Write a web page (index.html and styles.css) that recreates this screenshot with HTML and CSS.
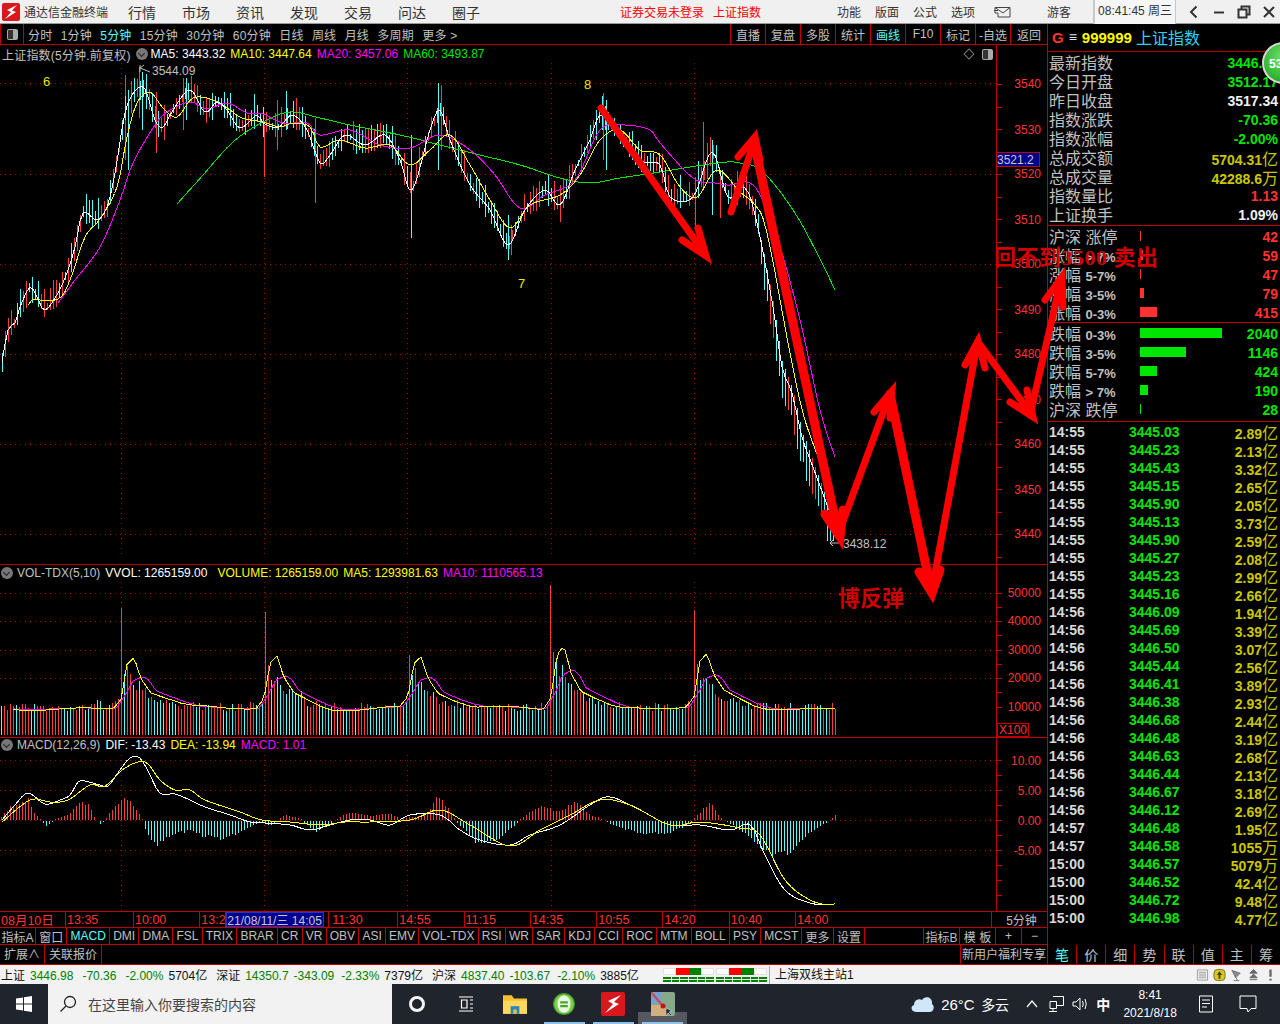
FILE: index.html
```html
<!DOCTYPE html>
<html lang="zh">
<head>
<meta charset="utf-8">
<title>通达信金融终端</title>
<link rel="stylesheet" href="styles.css">
</head>
<body>
<header class="titlebar">
  <svg class="logo" viewBox="0 0 18 18"><rect width="18" height="18" rx="2" fill="#d8181c"/><path d="M15 2 L5 7 L9 9 L3 16 L14 9 L10 7.5 Z" fill="#fff"/></svg>
  <span class="app-name">通达信金融终端</span>
  <nav class="menu"><span>行情</span><span>市场</span><span>资讯</span><span>发现</span><span>交易</span><span>问达</span><span>圈子</span></nav>
  <div class="notice"><span>证券交易未登录</span><span>上证指数</span></div>
  <nav class="menu-small"><span>功能</span><span>版面</span><span>公式</span><span>选项</span></nav>
  <svg class="mail" viewBox="0 0 17 12"><path d="M1 1.5 H16 V11 H4 V7 H1 Z M1 1.5 L9 7 L16 1.5 M0 4.5 H4" fill="none" stroke="#444"/></svg>
  <span class="guest">游客</span>
  <div class="clock">08:41:45 周三</div>
  <div class="winbtns">
    <svg viewBox="0 0 14 14"><path d="M9.5 1.5 L4 7 L9.5 12.5" fill="none" stroke="#333" stroke-width="2"/></svg>
    <svg viewBox="0 0 14 14"><path d="M2 7.5 H12" fill="none" stroke="#333" stroke-width="2"/></svg>
    <svg viewBox="0 0 14 14"><path d="M1.500 4.500 H9.500 V12.500 H1.500 Z M4.500 4 V1.500 H12.500 V9.500 H10" fill="none" stroke="#333" stroke-width="2"/></svg>
    <svg viewBox="0 0 14 14"><path d="M2 2 L12 12 M12 2 L2 12" fill="none" stroke="#333" stroke-width="2"/></svg>
  </div>
</header>

<main class="workspace">
  <section class="left">
    <div class="toolbar">
      <div class="panel-btn"><span class="panel-icon"></span></div>
      <div class="periods"><span>分时</span><span>1分钟</span><span class="on">5分钟</span><span>15分钟</span><span>30分钟</span><span>60分钟</span><span>日线</span><span>周线</span><span>月线</span><span>多周期</span><span>更多 &gt;</span></div>
      <div class="tools"><span>直播</span><span>复盘</span><span>多股</span><span>统计</span><span class="on">画线</span><span>F10</span><span>标记</span><span>-自选</span><span>返回</span></div>
    </div>

    <div class="pane pane-main">
      <div class="legend">
        <span class="c-gray spaced">上证指数(5分钟.前复权)</span><span class="chev"></span>
        <span class="c-white">MA5: 3443.32</span><span class="c-yellow">MA10: 3447.64</span><span class="c-magenta">MA20: 3457.06</span><span class="c-green">MA60: 3493.87</span>
        <span class="legend-tools"><i class="diamond"></i><span class="panel-icon"></span></span>
      </div>
      <svg id="main-chart" class="plot plot-main" viewBox="0 63 1047 501"></svg>
    </div>

    <div class="pane pane-vol">
      <div class="legend">
        <span class="chev first"></span><span class="c-gray">VOL-TDX(5,10)</span><span class="c-white">VVOL: 1265159.00</span><span class="c-yellow wide">VOLUME: 1265159.00</span><span class="c-yellow">MA5: 1293981.63</span><span class="c-magenta">MA10: 1110565.13</span>
      </div>
      <svg id="vol-chart" class="plot plot-vol" viewBox="0 582 1047 155"></svg>
    </div>

    <div class="pane pane-macd">
      <div class="legend">
        <span class="chev first"></span><span class="c-gray">MACD(12,26,9)</span><span class="c-white">DIF: -13.43</span><span class="c-yellow">DEA: -13.94</span><span class="c-magenta">MACD: 1.01</span>
      </div>
      <svg id="macd-chart" class="plot plot-macd" viewBox="0 755 1047 156"></svg>
    </div>

    <div class="timeline">
      <span class="t w67">08月10日</span><span class="t w67b">13:35</span><span class="t w66">10:00</span><span class="t w26">13:2</span><span class="cursor">21/08/11/三 14:05</span><span class="t w66s">11:30</span><span class="t w66">14:55</span><span class="t w66">11:15</span><span class="t w66">14:35</span><span class="t w66">10:55</span><span class="t w66">14:20</span><span class="t w66">10:40</span><span class="t w66e">14:00</span><span class="t-unit">5分钟</span>
    </div>

    <div class="tabs">
      <span class="first-tab">指标A</span><span>窗口</span><span class="on">MACD</span><span>DMI</span><span>DMA</span><span>FSL</span><span>TRIX</span><span>BRAR</span><span>CR</span><span>VR</span><span>OBV</span><span>ASI</span><span>EMV</span><span>VOL-TDX</span><span>RSI</span><span>WR</span><span>SAR</span><span>KDJ</span><span>CCI</span><span>ROC</span><span>MTM</span><span>BOLL</span><span>PSY</span><span>MCST</span><span>更多</span><span>设置</span>
      <div class="tabs-end"><span>指标B</span><span>模 板</span><span class="sq">+</span><span class="sq">−</span></div>
    </div>

    <div class="ext">
      <span>扩展∧</span><span>关联报价</span>
      <span class="promo">新用户福利专享</span>
    </div>
  </section>

  <aside class="right">
    <div class="quote-head"><b class="g">G</b><span class="eq">≡</span><b class="code">999999</b><span class="qname">上证指数</span></div>

    <div class="stats">
      <div class="row"><span>最新指数</span><b class="green">3446.98</b></div>
      <div class="row"><span>今日开盘</span><b class="green">3512.17</b></div>
      <div class="row"><span>昨日收盘</span><b class="white">3517.34</b></div>
      <div class="row"><span>指数涨跌</span><b class="green">-70.36</b></div>
      <div class="row"><span>指数涨幅</span><b class="green">-2.00%</b></div>
      <div class="row"><span>总成交额</span><b class="olive">5704.31<u>亿</u></b></div>
      <div class="row"><span>总成交量</span><b class="olive">42288.6<u>万</u></b></div>
      <div class="row"><span>指数量比</span><b class="red">1.13</b></div>
      <div class="row"><span>上证换手</span><b class="white">1.09%</b></div>
    </div>

    <div class="breadth up">
      <div class="row"><span class="lbl">沪深 涨停</span><i class="bar" style="width:1px"></i><b>42</b></div>
      <div class="row"><span class="lbl">涨幅 <small>&gt; 7%</small></span><i class="bar" style="width:3px"></i><b>59</b></div>
      <div class="row"><span class="lbl">涨幅 <small>5-7%</small></span><i class="bar" style="width:1px"></i><b>47</b></div>
      <div class="row"><span class="lbl">涨幅 <small>3-5%</small></span><i class="bar" style="width:4px"></i><b>79</b></div>
      <div class="row"><span class="lbl">涨幅 <small>0-3%</small></span><i class="bar" style="width:17px"></i><b>415</b></div>
    </div>
    <div class="breadth down">
      <div class="row"><span class="lbl">跌幅 <small>0-3%</small></span><i class="bar" style="width:82px"></i><b>2040</b></div>
      <div class="row"><span class="lbl">跌幅 <small>3-5%</small></span><i class="bar" style="width:46px"></i><b>1146</b></div>
      <div class="row"><span class="lbl">跌幅 <small>5-7%</small></span><i class="bar" style="width:17px"></i><b>424</b></div>
      <div class="row"><span class="lbl">跌幅 <small>&gt; 7%</small></span><i class="bar" style="width:8px"></i><b>190</b></div>
      <div class="row"><span class="lbl">沪深 跌停</span><i class="bar" style="width:1px"></i><b>28</b></div>
    </div>

    <div class="ticks">
      <div class="tick"><span>14:55</span><b>3445.03</b><i>2.89<u>亿</u></i></div>
      <div class="tick"><span>14:55</span><b>3445.23</b><i>2.13<u>亿</u></i></div>
      <div class="tick"><span>14:55</span><b>3445.43</b><i>3.32<u>亿</u></i></div>
      <div class="tick"><span>14:55</span><b>3445.15</b><i>2.65<u>亿</u></i></div>
      <div class="tick"><span>14:55</span><b>3445.90</b><i>2.05<u>亿</u></i></div>
      <div class="tick"><span>14:55</span><b>3445.13</b><i>3.73<u>亿</u></i></div>
      <div class="tick"><span>14:55</span><b>3445.90</b><i>2.59<u>亿</u></i></div>
      <div class="tick"><span>14:55</span><b>3445.27</b><i>2.08<u>亿</u></i></div>
      <div class="tick"><span>14:55</span><b>3445.23</b><i>2.99<u>亿</u></i></div>
      <div class="tick"><span>14:55</span><b>3445.16</b><i>2.66<u>亿</u></i></div>
      <div class="tick"><span>14:56</span><b>3446.09</b><i>1.94<u>亿</u></i></div>
      <div class="tick"><span>14:56</span><b>3445.69</b><i>3.39<u>亿</u></i></div>
      <div class="tick"><span>14:56</span><b>3446.50</b><i>3.07<u>亿</u></i></div>
      <div class="tick"><span>14:56</span><b>3445.44</b><i>2.56<u>亿</u></i></div>
      <div class="tick"><span>14:56</span><b>3446.41</b><i>3.89<u>亿</u></i></div>
      <div class="tick"><span>14:56</span><b>3446.38</b><i>2.93<u>亿</u></i></div>
      <div class="tick"><span>14:56</span><b>3446.68</b><i>2.44<u>亿</u></i></div>
      <div class="tick"><span>14:56</span><b>3446.48</b><i>3.19<u>亿</u></i></div>
      <div class="tick"><span>14:56</span><b>3446.63</b><i>2.68<u>亿</u></i></div>
      <div class="tick"><span>14:56</span><b>3446.44</b><i>2.13<u>亿</u></i></div>
      <div class="tick"><span>14:56</span><b>3446.67</b><i>3.18<u>亿</u></i></div>
      <div class="tick"><span>14:56</span><b>3446.12</b><i>2.69<u>亿</u></i></div>
      <div class="tick"><span>14:57</span><b>3446.48</b><i>1.95<u>亿</u></i></div>
      <div class="tick"><span>14:57</span><b>3446.58</b><i>1055<u>万</u></i></div>
      <div class="tick"><span>15:00</span><b>3446.57</b><i>5079<u>万</u></i></div>
      <div class="tick"><span>15:00</span><b>3446.52</b><i>42.4<u>亿</u></i></div>
      <div class="tick"><span>15:00</span><b>3446.72</b><i>9.48<u>亿</u></i></div>
      <div class="tick"><span>15:00</span><b>3446.98</b><i>4.77<u>亿</u></i></div>
    </div>

    <div class="side-tabs"><span class="on">笔</span><span>价</span><span>细</span><span>势</span><span>联</span><span>值</span><span>主</span><span>筹</span></div>
  </aside>
</main>

<footer class="statusbar">
  <div class="market">
    <span>上证</span><em>3446.98</em><em class="gap">-70.36</em><em class="gap">-2.00%</em><span>5704亿</span>
    <span class="gap">深证</span><em>14350.7</em><em>-343.09</em><em class="gap2">-2.33%</em><span>7379亿</span>
    <span class="gap">沪深</span><em>4837.40</em><em>-103.67</em><em class="gap2">-2.10%</em><span>3885亿</span>
  </div>
  <div class="meter">
    <div class="meter-set"><div class="meter-top"><i></i><i class="r"></i><i class="g"></i><i></i></div><div class="meter-low"><i></i><i></i><i></i><i></i><i></i><i></i></div></div>
    <div class="meter-set"><div class="meter-top"><i></i><i class="r"></i><i class="g"></i><i></i></div><div class="meter-low"><i></i><i></i><i></i><i></i><i></i><i></i></div></div>
  </div>
  <span class="server">上海双线主站1</span>
  <div class="status-icons">
    <svg viewBox="0 0 14 14"><path d="M1.500 1.500 H12.500 V12.500 H1.500 Z M3 4 H11 M3 6 H11 M3 8 H11 M3 10 H11" fill="#f4f4f4" stroke="#999"/></svg>
    <svg viewBox="0 0 14 14"><rect x="1" y="1" width="12" height="12" rx="4" fill="#d8c62a" stroke="#77701a"/><path d="M7 3 L10 7 H8 V11 H6 V7 H4 Z" fill="#4a4410"/></svg>
    <svg viewBox="0 0 14 14"><path d="M2 2 L11 5 L6 10 Z M6 9 L8 13 M4 13 H10" fill="#888" stroke="#777"/></svg>
    <svg viewBox="0 0 14 14"><path d="M7 1 L11 5 H3 Z M7 6 L11 10 H3 Z M3 12 H11" fill="#666" stroke="#666"/></svg>
    <svg viewBox="0 0 14 14"><path d="M7 1 V9 M7 11 V13" stroke="#666" stroke-width="2.500" fill="none"/></svg>
  </div>
</footer>

<footer class="taskbar">
  <svg class="win" viewBox="0 0 16 16"><path d="M0 2.500 L7 1.500 V7.500 H0 Z M8 1.300 L16 0 V7.500 H8 Z M0 8.500 H7 V14.500 L0 13.500 Z M8 8.500 H16 V16 L8 14.700 Z" fill="#fff"/></svg>
  <div class="search">
    <svg viewBox="0 0 18 18"><circle cx="11" cy="7" r="5.500" fill="none" stroke="#222" stroke-width="1.300"/><path d="M7 11 L1.500 16.500" stroke="#222" stroke-width="1.300"/></svg>
    <span>在这里输入你要搜索的内容</span>
  </div>
  <div class="apps">
    <div class="app"><span class="cortana"></span></div>
    <div class="app"><svg class="tv" viewBox="0 0 16 16"><path d="M1 1 H15 M1 15 H15 M3.500 4 H9 V12 H3.500 Z M12 4 H15 M12 8 H15 M12 12 H15" fill="none" stroke="#fff" stroke-width="1.200"/></svg></div>
    <div class="app"><svg class="tv22" viewBox="0 0 22 20"><path d="M0 2 H8 L10 5 H22 V19 H0 Z" fill="#f4c22e"/><path d="M0 7 H22 V19 H0 Z" fill="#ffd85c"/><rect x="7" y="12" width="8" height="7" fill="#2a83c8"/><rect x="9.500" y="15" width="3" height="4" fill="#f4c22e"/></svg></div>
    <div class="app run"><svg class="tv22" viewBox="0 0 22 22"><circle cx="11" cy="11" r="9.500" fill="#7cd04a" stroke="#3f9a2c"/><ellipse cx="11" cy="11" rx="6" ry="8" fill="#eaf7e0"/><path d="M7.500 9.500 H14.500 M7.500 13 H14.500" stroke="#49a531" stroke-width="2"/></svg></div>
    <div class="app run"><svg class="tv22" viewBox="0 0 24 24"><rect width="24" height="24" rx="2" fill="#d8181c"/><path d="M20 3 L7 9 L12 12 L4 21 L18 12 L13 10 Z" fill="#fff"/></svg></div>
    <div class="app run focus"><svg class="tv24" viewBox="0 0 24 24"><rect width="24" height="24" rx="2" fill="#86a98a"/><rect width="11" height="12" fill="#7a9fc8"/><rect y="13" width="14" height="11" fill="#d2b07c"/><path d="M0 0 L12 14" stroke="#c64a4a" stroke-width="2"/><circle cx="12" cy="14" r="2.500" fill="#c01818"/><path d="M15 16 V24 L17 21 L20 24 L21 23 L18 20 L21 19 Z" fill="#222" stroke="#ddd" stroke-width=".6"/></svg></div>
  </div>
  <div class="tray">
    <svg class="cloud" viewBox="0 0 24 18"><path d="M6 17 C1 17 0 11 4 10 C4 5 9 3 12 5 C15 0 23 2 22 9 C25 11 24 17 20 17 Z" fill="#cfe6fb"/></svg>
    <span class="temp">26°C</span><span class="weather">多云</span>
    <svg class="chev-up" viewBox="0 0 12 8"><path d="M1 7 L6 1 L11 7" fill="none" stroke="#fff" stroke-width="1.200"/></svg>
    <svg class="net" viewBox="0 0 16 16"><path d="M5 .5 H15.500 V9.500 H8 M2 5.500 H8.500 V12.500 H2 Z M5 12.500 V15 M1 15.500 H9" fill="none" stroke="#fff"/></svg>
    <svg class="spk" viewBox="0 0 16 16"><path d="M1 6 H4 L8 2 V14 L4 10 H1 Z M10.500 5 Q12 8 10.500 11 M13 3 Q15.500 8 13 13" fill="none" stroke="#fff"/></svg>
    <span class="ime">中</span>
    <div class="datetime"><span>8:41</span><span>2021/8/18</span></div>
    <svg class="note" viewBox="0 0 16 18"><path d="M1.500 1 H14.500 V17 H1.500 Z M4 5 H12 M4 8.500 H12 M4 12 H9" fill="none" stroke="#fff"/></svg>
    <svg class="chat" viewBox="0 0 18 18"><path d="M1 1 H17 V13.500 H12 L9 17 L8 13.500 H1 Z" fill="none" stroke="#fff"/></svg>
  </div>
</footer>

<div class="badge">53</div>

<svg class="marks" viewBox="0 0 1280 1024">
  <g class="mk6">
    <path d="M601 108 L705 254 M682 240 L706 256 L698 228"/>
    <path d="M731 212 L754 142 M738 157 L755 137 L760 160"/>
    <path d="M838 535 L890 394 M874 412 L892 391 L890 418"/>
    <path d="M932 590 L977 345 M965 365 L978 341 L985 368"/>
    <path d="M978 342 L1032 415 M1010 402 L1033 417 L1027 390"/>
    <path d="M1030 415 L1061 280 M1045 300 L1062 277 L1063 307"/>
  </g>
  <g class="mk8">
    <path d="M754 142 L838 532 M825 514 L840 537 L843 510"/>
    <path d="M890 394 L931 590 M919 572 L932 593 L940 570"/>
  </g>
</svg>
<span class="note-a">回不到3500 卖出</span>
<span class="note-b">博反弹</span>

<script src="chart.js"></script>
</body>
</html>
```
FILE: styles.css
```css
* { box-sizing: border-box; }
html, body { margin: 0; padding: 0; }
body {
  width: 1280px; height: 1024px; overflow: hidden; position: relative;
  display: flex; flex-direction: column; background: #000;
  font-family: "Liberation Sans", "Noto Sans CJK SC", sans-serif;
  font-size: 12px; color: #c0c0c0;
}
i, em, u { font-style: normal; text-decoration: none; }

.titlebar { height: 24px; flex: none; display: flex; align-items: center; background: #f0f0f0; color: #333; border-bottom: 1px solid #999; white-space: nowrap; }
.titlebar > * { flex: none; }
.logo { width: 18px; height: 18px; margin-left: 2px; }
.app-name { margin-left: 4px; width: 84px; }
.menu { display: flex; gap: 26px; margin-left: 20px; font-size: 14px; }
.notice { display: flex; gap: 9px; margin-left: 140px; color: #f00; }
.menu-small { display: flex; gap: 14px; margin-left: 76px; }
.mail { width: 17px; height: 12px; margin-left: 19px; }
.guest { margin-left: 36px; }
.clock { margin-left: 22px; width: 83px; height: 24px; line-height: 23px; text-align: center; border-left: 2px solid #c8c8c8; border-right: 1px solid #c8c8c8; background: #f6f6f6; }
.winbtns { display: flex; gap: 11px; margin-left: 11px; }
.winbtns svg { width: 14px; height: 14px; }

.workspace { flex: none; height: 940px; display: flex; background: #000; }
.left { width: 1047px; flex: none; display: flex; flex-direction: column; }
.right { width: 233px; flex: none; display: flex; flex-direction: column; border-left: 1px solid #c00000; }

.toolbar { height: 21px; flex: none; display: flex; align-items: stretch; border-bottom: 1px solid #c00000; }
.panel-btn { width: 24px; display: flex; align-items: center; justify-content: center; border-left: 1px solid #c00000; border-right: 1px solid #c00000; }
.panel-icon { display: inline-block; width: 11px; height: 11px; border: 1px solid #aaa; border-right-width: 5px; border-radius: 2px; background: #333; }
.periods { display: flex; align-items: center; gap: 8.300px; margin-left: 4px; letter-spacing: .2px; }
.tools { display: flex; margin-left: auto; height: 20px; }
.tools span { display: flex; align-items: center; justify-content: center; width: 35px; border-left: 1px solid #c00000; white-space: nowrap; }
.tools span:last-child { width: 37px; }
.on { color: #54ffff; }

.pane { flex: none; display: flex; flex-direction: column; }
.pane-main { height: 520px; border-bottom: 1px solid #c00000; }
.pane-vol { height: 173px; border-bottom: 1px solid #c00000; }
.pane-macd { height: 173px; }
.legend { height: 18px; flex: none; width: 997px; display: flex; align-items: center; gap: 5px; padding-left: 2px; border-right: 1px solid #c00000; white-space: nowrap; }
.pane-vol .legend { height: 17px; padding-bottom: 1px; }
.pane-macd .legend { height: 17px; padding-bottom: 3px; }
.spaced { letter-spacing: .2px; }
.wide { margin-left: 5px; }
.chev { width: 12px; height: 12px; border-radius: 50%; background: #777; flex: none; margin-right: -2px; position: relative; }
.chev::after { content: ""; position: absolute; left: 3px; top: 2.500px; width: 4px; height: 4px; border: solid #222; border-width: 0 1.500px 1.500px 0; transform: rotate(45deg); }
.chev.first { margin-left: -1px; margin-right: -1px; }
.legend-tools { margin-left: auto; display: flex; align-items: center; gap: 9px; padding-right: 3px; }
.diamond { width: 8px; height: 8px; border: 1px solid #777; transform: rotate(45deg); display: block; }
.plot { display: block; width: 1047px; flex: 1; min-height: 0; }

.c-gray { color: #c0c0c0; }
.c-white { color: #fff; }
.c-yellow { color: #ffff00; }
.c-magenta { color: #ff00ff; }
.c-green { color: #00e600; }

/* chart parts */
.grid { stroke: #a80000; stroke-width: 1; stroke-dasharray: 1 4; fill: none; shape-rendering: crispEdges; }
.axis { stroke: #c00000; stroke-width: 1; fill: none; shape-rendering: crispEdges; }
.bar-up { stroke: #ff3c3c; fill: none; shape-rendering: crispEdges; }
.bar-dn { stroke: #54ffff; fill: none; shape-rendering: crispEdges; }
.ln { fill: none; stroke-width: 1; stroke-linejoin: round; shape-rendering: crispEdges; }
.ln-w { stroke: #fff; }
.ln-y { stroke: #ffff00; }
.ln-m { stroke: #ff00ff; }
.ln-g { stroke: #00e600; }
.lbl-axis { fill: #ff3232; font-size: 12px; text-anchor: end; }
.lbl-hl { fill: #c0c0c0; font-size: 12px; }
.lbl-wave { fill: #e6e600; font-size: 13px; }
.lbl-box { fill: #000090; stroke: #c00000; }
.lbl-cross { fill: #c8c8c8; font-size: 12px; }
.hl-arrow { stroke: #c0c0c0; fill: none; }

.timeline { height: 17px; flex: none; display: flex; align-items: center; border-top: 1px solid #c00000; border-bottom: 1px solid #c00000; color: #ff3232; white-space: nowrap; font-size: 12.500px; }
.t { height: 100%; display: flex; align-items: center; padding-left: 1px; border-right: 1px solid #c00000; overflow: hidden; flex: none; }
.w67 { width: 66px; }
.w67b { width: 68px; }
.w66 { width: 66.300px; }
.w26 { width: 26px; }
.w66s { width: 70px; border-left: 1px solid #c00000; margin-left: 4px; padding-left: 3px; }
.w66e { width: 196px; border-right: 1px solid #c00000; }
.cursor { background: #000090; color: #c8c8c8; width: 98px; height: 100%; display: flex; align-items: center; flex: none; font-size: 12px; overflow: hidden; border: 1px solid #3030c0; }
.t-unit { margin-left: auto; width: 51px; text-align: center; color: #c0c0c0; font-size: 12px; }

.tabs { height: 17px; flex: none; display: flex; align-items: stretch; border-bottom: 1px solid #c00000; white-space: nowrap; }
.tabs > span { display: flex; align-items: center; padding: 0 3.160px; border-right: 1px solid #c00000; }
.tabs > .first-tab { padding: 0 1.500px; }
.tabs-end { margin-left: auto; display: flex; }
.tabs-end span { display: flex; align-items: center; justify-content: center; width: 36px; border-left: 1px solid #c00000; }
.tabs-end .sq { width: 26px; }
.tabs-end .sq:first-of-type { width: 25px; }
.ext { height: 19px; flex: none; display: flex; align-items: stretch; white-space: nowrap; }
.ext span { display: flex; align-items: center; padding: 0 4px 2px; border-right: 1px solid #c00000; }
.ext .promo { margin-left: auto; border-left: 1px solid #c00000; border-right: 0; padding: 0 1px 2px; }

.quote-head { height: 28px; flex: none; display: flex; align-items: center; gap: 5px; padding: 0 0 1px 4px; border-bottom: 1px solid #c00000; font-size: 16px; }
.quote-head b { font-size: 15px; }
.g { color: #ff3232; }
.eq { color: #e0e0e0; font-size: 14px; }
.code { color: #ffff00; }
.qname { color: #30d0f0; margin-left: -1px; }

.stats { height: 174px; flex: none; border-bottom: 1px solid #c00000; }
.row { height: 19px; display: flex; align-items: center; justify-content: space-between; padding: 0 2px 0 1px; font-size: 16px; white-space: nowrap; }
.row b { font-size: 14px; padding-top: 2px; }
.row u { font-size: 16px; font-weight: 400; }
.green { color: #00e600; }
.white { color: #f0f0f0; }
.olive { color: #c8c800; }
.red { color: #ff3232; }

.breadth { flex: none; border-bottom: 1px solid #c00000; }
.breadth.up { height: 97px; }
.breadth.down { height: 99px; }
.breadth .row { justify-content: flex-start; }
.lbl { width: 91px; flex: none; font-size: 16px; }
.lbl small { font-size: 13px; font-weight: 700; }
.bar { display: block; height: 10px; }
.breadth b { margin-left: auto; }
.up .bar { background: #ff3232; }
.up b { color: #ff3232; }
.down .bar { background: #00e600; }
.down b { color: #00e600; }

.ticks { flex: none; padding-top: 1px; }
.tick { height: 18px; display: flex; align-items: center; padding: 0 2px 0 1px; white-space: nowrap; font-weight: 700; font-size: 14px; }
.tick span { width: 80px; color: #d8d8d8; }
.tick b { color: #00e600; }
.tick i { margin-left: auto; color: #c8c800; }
.tick u { font-size: 16px; font-weight: 400; }

.side-tabs { margin-top: auto; height: 19px; flex: none; display: flex; }
.side-tabs span { flex: 1; display: flex; align-items: center; justify-content: center; font-size: 14px; padding-bottom: 2px; border-left: 1px solid #c00000; }
.side-tabs span:first-child { border-left: 0; }

.statusbar { height: 20px; flex: none; display: flex; align-items: center; background: #f2f2f2; color: #111; border-top: 1px solid #c00000; white-space: nowrap; }
.market { display: flex; align-items: baseline; gap: 5px; width: 663px; padding-left: 1px; flex: none; }
.market em { color: #008000; }
.market .gap { margin-left: 4px; }
.market .gap2 { margin-left: 2px; }
.meter { display: flex; gap: 2px; width: 106px; height: 18px; align-items: center; padding-left: 0; flex: none; }
.meter-set { width: 51px; }
.meter-top { display: flex; height: 7px; }
.meter-top i { flex: 1; background: #fafafa; border: 1px solid #e0e0e0; }
.meter-top .r { background: #f00; border-color: #f00; }
.meter-top .g { background: #008000; border-color: #008000; }
.meter-low { display: flex; gap: 1px; margin-top: 2px; }
.meter-low i { flex: 1; height: 5px; background: repeating-linear-gradient(#008000 0 2px, #f2f2f2 2px 3px); }
.server { border-left: 1px solid #aaa; padding-left: 5px; height: 18px; line-height: 18px; }
.status-icons { margin-left: auto; display: flex; gap: 4px; padding-right: 3px; }
.status-icons svg { width: 13px; height: 14px; }

.taskbar { height: 40px; flex: none; display: flex; align-items: center; background: #20242c; color: #fff; }
.win { width: 16px; height: 16px; margin-left: 16px; flex: none; }
.search { margin-left: 16px; width: 344px; height: 40px; background: #f2f2f2; color: #444; display: flex; align-items: center; font-size: 14px; flex: none; }
.search svg { width: 18px; height: 18px; margin-left: 11px; }
.search span { margin-left: 11px; }
.apps { display: flex; flex: none; }
.app { width: 49.200px; height: 40px; display: flex; align-items: center; justify-content: center; flex: none; position: relative; }
.cortana { width: 16px; height: 16px; border-radius: 50%; border: 3px solid #f4f4f4; display: block; }
.tv { width: 16px; height: 16px; }
.tv22 { width: 24px; height: 24px; }
.tv24 { width: 24px; height: 24px; }
.app.run::after { content: ""; position: absolute; left: 4px; right: 4px; bottom: 0; height: 2px; background: #8fc4ea; }
.app.focus { background: linear-gradient(#20242c 0 28px, #55585f 28px); }
.tray { display: flex; align-items: center; flex: 1; min-width: 0; white-space: nowrap; }
.tray > * { flex: none; }
.cloud { width: 24px; height: 18px; margin-left: 223px; }
.temp { margin-left: 7px; font-size: 15px; width: 33px; }
.weather { margin-left: 7px; font-size: 14px; }
.chev-up { width: 12px; height: 8px; margin-left: 17px; }
.net { width: 16px; height: 16px; margin-left: 10px; }
.spk { width: 16px; height: 16px; margin-left: 8px; }
.ime { margin-left: 8px; font-size: 14px; font-weight: 700; }
.datetime { display: flex; flex-direction: column; align-items: center; gap: 4px; width: 70px; margin-left: 5px; font-size: 12px; line-height: 14px; }
.note { width: 16px; height: 18px; margin-left: 13px; }
.chat { width: 18px; height: 18px; margin-left: 25px; }

.badge { position: absolute; left: 1262px; top: 42px; width: 42px; height: 42px; border-radius: 50%; border: 2px solid #d8d8d8; background: radial-gradient(circle at 50% 35%, #6fe06f, #16a016); color: #fff; font-weight: 700; font-size: 12px; line-height: 40px; padding-left: 5px; }
.marks { position: absolute; left: 0; top: 0; width: 1280px; height: 1024px; pointer-events: none; }
.marks path { fill: none; stroke: #ff0000; stroke-linecap: round; stroke-linejoin: miter; }
.mk6 path { stroke-width: 7; }
.mk8 path { stroke-width: 9; }
.note-a, .note-b { position: absolute; color: #d00000; font-family: "Liberation Serif", "Noto Sans CJK SC", serif; font-weight: 700; font-size: 22px; line-height: 24px; white-space: nowrap; pointer-events: none; }
.note-a { left: 994px; top: 246px; letter-spacing: .5px; }
.note-b { left: 838px; top: 587px; }
```
FILE: chart.js
```js
(function () {
  var NS = 'http://www.w3.org/2000/svg';
  var seed = 20210818;
  function rnd() { seed = (seed * 1664525 + 1013904223) % 4294967296; return seed / 4294967296; }
  function el(svg, tag, attrs, text) {
    var e = document.createElementNS(NS, tag);
    for (var k in attrs) e.setAttribute(k, attrs[k]);
    if (text != null) e.textContent = text;
    svg.appendChild(e);
    return e;
  }
  function interp(pts, x) {
    if (x <= pts[0][0]) return pts[0][1];
    for (var i = 1; i < pts.length; i++) {
      if (x <= pts[i][0]) {
        var a = pts[i - 1], b = pts[i];
        return a[1] + (b[1] - a[1]) * (x - a[0]) / (b[0] - a[0]);
      }
    }
    return pts[pts.length - 1][1];
  }
  // Catmull-Rom smoothing over the key points, sampled every 3px
  function smooth(pts) {
    var out = [];
    for (var i = 0; i < pts.length - 1; i++) {
      var p0 = pts[Math.max(i - 1, 0)], p1 = pts[i], p2 = pts[i + 1], p3 = pts[Math.min(i + 2, pts.length - 1)];
      var n = Math.max(1, Math.round((p2[0] - p1[0]) / 3));
      for (var j = 0; j < n; j++) {
        var t = j / n, t2 = t * t, t3 = t2 * t;
        out.push([
          .5 * (2 * p1[0] + (p2[0] - p0[0]) * t + (2 * p0[0] - 5 * p1[0] + 4 * p2[0] - p3[0]) * t2 + (3 * p1[0] - p0[0] - 3 * p2[0] + p3[0]) * t3),
          .5 * (2 * p1[1] + (p2[1] - p0[1]) * t + (2 * p0[1] - 5 * p1[1] + 4 * p2[1] - p3[1]) * t2 + (3 * p1[1] - p0[1] - 3 * p2[1] + p3[1]) * t3)
        ]);
      }
    }
    out.push(pts[pts.length - 1]);
    return out;
  }
  function line(svg, pts, cls) {
    el(svg, 'polyline', { 'class': 'ln ' + cls, points: smooth(pts).map(function (p) { return p[0].toFixed(1) + ',' + p[1].toFixed(1); }).join(' ') });
  }
  function grid(svg, ys, vx, y0, y1) {
    ys.forEach(function (y) { el(svg, 'path', { 'class': 'grid', d: 'M0 ' + (y + .5) + ' H996' }); });
    vx.forEach(function (x) { el(svg, 'path', { 'class': 'grid', d: 'M' + (x + .5) + ' ' + y0 + ' V' + y1 }); });
  }
  function axis(svg, y0, y1, labels, minor) {
    el(svg, 'path', { 'class': 'axis', d: 'M996.5 ' + y0 + ' V' + y1 });
    minor.forEach(function (y) { el(svg, 'path', { 'class': 'axis', d: 'M996 ' + (y + .5) + ' H1002' }); });
    labels.forEach(function (l) { el(svg, 'text', { 'class': 'lbl-axis', x: 1041, y: l[1] + 4 }, l[0]); });
  }
  var VX = [121, 264, 407, 551, 694];

  /* ---------- main price chart ---------- */
  var W = [[2, 362], [8, 330], [15, 323], [20, 307], [30, 287], [37, 297], [45, 310], [58, 293], [68, 270], [75, 247], [83, 213], [97, 220], [107, 207], [115, 173], [125, 113], [135, 91], [145, 89], [155, 120], [163, 127], [173, 110], [190, 90], [205, 112], [217, 102], [227, 110], [240, 128], [257, 115], [263, 123], [277, 128], [283, 123], [293, 115], [307, 130], [320, 163], [330, 155], [345, 135], [365, 145], [385, 135], [400, 160], [412, 190], [430, 130], [440, 110], [450, 140], [470, 185], [490, 210], [508, 245], [525, 210], [545, 190], [560, 205], [575, 170], [590, 140], [600, 115], [615, 130], [640, 160], [660, 165], [670, 197], [693, 197], [712, 152], [728, 197], [745, 188], [757, 223], [773, 307], [782, 367], [792, 393], [802, 437], [813, 467], [830, 513], [835, 530]];
  var Y = [[28, 305], [32, 300], [58, 299], [70, 280], [85, 237], [100, 219], [117, 187], [127, 137], [137, 103], [150, 92], [163, 108], [177, 117], [193, 98], [213, 100], [230, 110], [242, 118], [263, 122], [280, 127], [293, 123], [310, 127], [320, 147], [340, 140], [365, 148], [390, 145], [410, 165], [430, 150], [450, 135], [470, 165], [490, 200], [510, 228], [530, 205], [560, 195], [580, 175], [600, 140], [620, 130], [640, 150], [660, 155], [680, 187], [697, 197], [717, 170], [740, 192], [755, 205], [767, 233], [790, 353], [803, 413], [818, 457], [835, 500]];
  var M = [[58, 303], [75, 280], [100, 247], [120, 200], [133, 163], [153, 128], [167, 112], [190, 102], [207, 109], [227, 103], [247, 113], [263, 114], [283, 123], [307, 123], [320, 135], [350, 130], [380, 145], [410, 148], [440, 135], [470, 150], [495, 175], [520, 208], [545, 195], [575, 180], [600, 130], [625, 125], [650, 130], [660, 143], [693, 178], [715, 183], [730, 185], [747, 182], [760, 195], [780, 247], [800, 320], [820, 410], [835, 457]];
  var G = [[177, 204], [203, 175], [233, 142], [263, 122], [290, 112], [320, 118], [350, 125], [400, 135], [440, 145], [480, 155], [520, 165], [560, 178], [590, 183], [620, 178], [660, 172], [717, 163], [740, 163], [763, 172], [793, 210], [817, 253], [835, 290]];
  var OVERRIDE = [[139, 67, 118, 1], [142, 72, 130, 0], [125, 75, 160, 1], [128, 90, 170, 0], [156, 92, 153, 1], [183, 78, 130, 1], [186, 78, 120, 0], [264, 125, 177, 1], [277, 100, 150, 1], [286, 91, 130, 0], [315, 118, 203, 1], [411, 135, 238, 0], [438, 83, 170, 0], [441, 85, 150, 1], [508, 215, 260, 0], [511, 225, 255, 1], [603, 93, 160, 1], [606, 100, 170, 0], [695, 180, 230, 1], [703, 122, 190, 1], [712, 140, 215, 0], [720, 170, 218, 1]];
  var main = document.getElementById('main-chart');
  grid(main, [83, 174, 264, 354, 444, 534], VX, 63, 557);
  var ups = '', dns = '';
  function addCandle(x, t, b, up) {
    var s = 'M' + (x + .5) + ' ' + Math.round(t) + ' V' + Math.round(b);
    if (up) ups += s; else dns += s;
  }
  for (var x = 2; x < 836; x += 3) {
    var c = interp(W, x), c2 = interp(W, x + 6);
    var steep = x > 760;
    var up = steep ? rnd() < .18 : (c2 < c ? rnd() < .72 : rnd() < .32);
    var len = (steep ? 20 : 5) + rnd() * (steep ? 18 : 17);
    var top = c - len * (steep ? .2 : .6 + rnd() * .5);
    var bot = Math.min(c + len * (steep ? 1 : .4 + rnd() * .4), 541);
    addCandle(x, top, bot, up);
  }
  OVERRIDE.forEach(function (o) { addCandle(o[0], o[1], o[2], o[3]); });
  el(main, 'path', { 'class': 'bar-up', d: ups });
  el(main, 'path', { 'class': 'bar-dn', d: dns });
  line(main, G, 'ln-g'); line(main, M, 'ln-m'); line(main, Y, 'ln-y'); line(main, W, 'ln-w');
  var minor = [];
  for (var m = 84; m < 560; m += 22.5) minor.push(Math.round(m));
  axis(main, 45, 564, [['3540', 84], ['3530', 130], ['3520', 174], ['3510', 220], ['3500', 264], ['3490', 310], ['3480', 354], ['3470', 400], ['3460', 444], ['3450', 490], ['3440', 534]], minor);
  el(main, 'rect', { 'class': 'lbl-box', x: 996.5, y: 152.5, width: 43, height: 14 });
  el(main, 'text', { 'class': 'lbl-cross', x: 997, y: 164 }, '3521.2');
  [['6', 43, 86], ['8', 584, 89], ['7', 518, 288]].forEach(function (t) { el(main, 'text', { 'class': 'lbl-wave', x: t[1], y: t[2] }, t[0]); });
  el(main, 'path', { 'class': 'hl-arrow', d: 'M150 72 L140 68 M140 65 V72 M140 68 L144 65' });
  el(main, 'text', { 'class': 'lbl-hl', x: 152, y: 75 }, '3544.09');
  el(main, 'path', { 'class': 'hl-arrow', d: 'M841 543 H830 M833 540 L830 543 L833 546' });
  el(main, 'text', { 'class': 'lbl-hl', x: 843, y: 548 }, '3438.12');

  /* ---------- volume chart ---------- */
  var vol = document.getElementById('vol-chart');
  grid(vol, [593, 621, 650, 678], VX, 582, 737);
  var SPIKE = [[121, 608], [264, 612], [408, 655], [551, 585], [694, 610]];
  var SCALE = [1, 1, .95, 1.25, 1];
  var vu = '', vd = '';
  for (var vx = 1; vx < 836; vx += 3) {
    var h = 24 + rnd() * 8, isSpike = false;
    SPIKE.forEach(function (s, i) {
      var d = vx - s[0];
      if (d >= -1 && d <= 1 && !isSpike) { h = 735 - s[1]; isSpike = true; }
      else if (d > 1 && d < 90) h += SCALE[i] * 50 * Math.exp(-d / 18) * (.7 + rnd() * .6);
      else if (d > -20 && d < -1) h += (20 + d) * .5 * rnd();
    });
    if (Math.abs(vx - 300) < 6 || Math.abs(vx - 95) < 6) h += 5;
    var s2 = 'M' + (vx + .5) + ' ' + Math.round(735 - h) + ' V735';
    if (isSpike || (rnd() < .5)) vu += s2; else vd += s2;
  }
  el(vol, 'path', { 'class': 'bar-up', d: vu });
  el(vol, 'path', { 'class': 'bar-dn', d: vd });
  var yb = [[-8, 0], [0, 10], [6, 45], [13, 52], [20, 30], [30, 15], [45, 8], [60, 2], [70, 0]];
  var mb = [[-5, 0], [5, 15], [12, 28], [22, 32], [28, 28], [35, 17], [50, 10], [65, 4], [80, 0]];
  function bump(shape, x) {
    var v = 0;
    SPIKE.forEach(function (s, i) {
      var d = x - s[0];
      if (d >= shape[0][0] && d <= shape[shape.length - 1][0]) v += interp(shape, d) * SCALE[i];
    });
    return v;
  }
  var vy = [], vm = [];
  for (var lx = 13; lx <= 835; lx += 3) {
    var wob = Math.sin(lx / 17) * 1.5 + Math.sin(lx / 41) * 1.5;
    vy.push([lx, 708 + wob - bump(yb, lx)]);
    vm.push([lx, 708 + wob * .6 - bump(mb, lx)]);
  }
  function raw(svg, pts, cls) { el(svg, 'polyline', { 'class': 'ln ' + cls, points: pts.map(function (p) { return p[0] + ',' + p[1].toFixed(1); }).join(' ') }); }
  raw(vol, vm, 'ln-m'); raw(vol, vy, 'ln-y');
  axis(vol, 582, 737, [['50000', 593], ['40000', 621], ['30000', 650], ['20000', 678], ['10000', 707]], [593, 607, 621, 635, 650, 664, 678, 692, 707]);
  el(vol, 'rect', { 'class': 'axis', x: 997.5, y: 723.5, width: 31, height: 13 });
  el(vol, 'text', { 'class': 'lbl-axis', x: 1027, y: 734 }, 'X100');

  /* ---------- MACD chart ---------- */
  var macd = document.getElementById('macd-chart');
  grid(macd, [760, 790, 820, 850], VX, 755, 911);
  var HIST = [[0, 2], [12, 15], [28, 20], [33, 8], [40, 1], [46, -5], [55, 1], [70, 6], [78, 18], [88, 15], [95, 2], [100, -3], [105, 1], [115, 15], [125, 23], [135, 13], [142, 1], [148, -15], [158, -25], [170, -14], [190, -9], [205, -16], [225, -18], [240, -10], [262, -1], [270, -5], [285, 5], [300, 2], [315, -12], [330, -2], [350, 8], [370, 4], [390, 6], [400, 1], [425, 5], [438, 25], [450, 8], [458, -3], [475, -20], [495, -20], [510, -8], [520, 1], [540, 15], [560, 8], [575, 18], [590, 5], [600, 2], [615, -5], [640, -12], [670, -12], [690, -2], [700, 8], [710, 18], [720, 2], [735, -5], [750, -18], [770, -32], [790, -35], [805, -15], [820, -5], [830, 1], [835, 5]];
  var hu = '', hd = '';
  for (var hx = 1; hx < 836; hx += 3) {
    var hv = interp(HIST, hx) * (.88 + rnd() * .24);
    if (Math.abs(hv) < .5) continue;
    if (hv > 0) hu += 'M' + (hx + .5) + ' ' + Math.round(820 - hv) + ' V820';
    else hd += 'M' + (hx + .5) + ' 821 V' + Math.round(821 - hv);
  }
  el(macd, 'path', { 'class': 'bar-up', d: hu });
  el(macd, 'path', { 'class': 'bar-dn', d: hd });
  line(macd, [[2, 820], [15, 805], [28, 793], [45, 804], [60, 800], [70, 795], [78, 782], [85, 781], [100, 785], [108, 786], [120, 770], [130, 758], [140, 758], [150, 775], [160, 793], [175, 794], [190, 800], [205, 807], [230, 815], [250, 822], [265, 823], [290, 825], [310, 830], [330, 825], [350, 820], [370, 820], [390, 825], [410, 815], [440, 815], [460, 830], [480, 840], [510, 845], [530, 835], [560, 825], [590, 805], [610, 797], [640, 810], [670, 825], [700, 825], [730, 830], [750, 825], [765, 855], [785, 890], [810, 903], [833, 905]], 'ln-w');
  line(macd, [[2, 822], [30, 800], [50, 802], [68, 800], [90, 785], [105, 786], [125, 768], [145, 762], [160, 780], [175, 790], [190, 790], [205, 800], [240, 812], [262, 820], [290, 822], [320, 825], [345, 822], [370, 822], [410, 820], [440, 810], [470, 825], [510, 846], [540, 830], [570, 815], [600, 800], [630, 805], [670, 825], [700, 822], [740, 828], [760, 835], [785, 880], [810, 900], [830, 905], [835, 903]], 'ln-y');
  axis(macd, 755, 911, [['10.00', 761], ['5.00', 791], ['0.00', 821], ['-5.00', 851]], [760, 775, 790, 805, 820, 835, 850, 865, 880, 895]);
})();
```
